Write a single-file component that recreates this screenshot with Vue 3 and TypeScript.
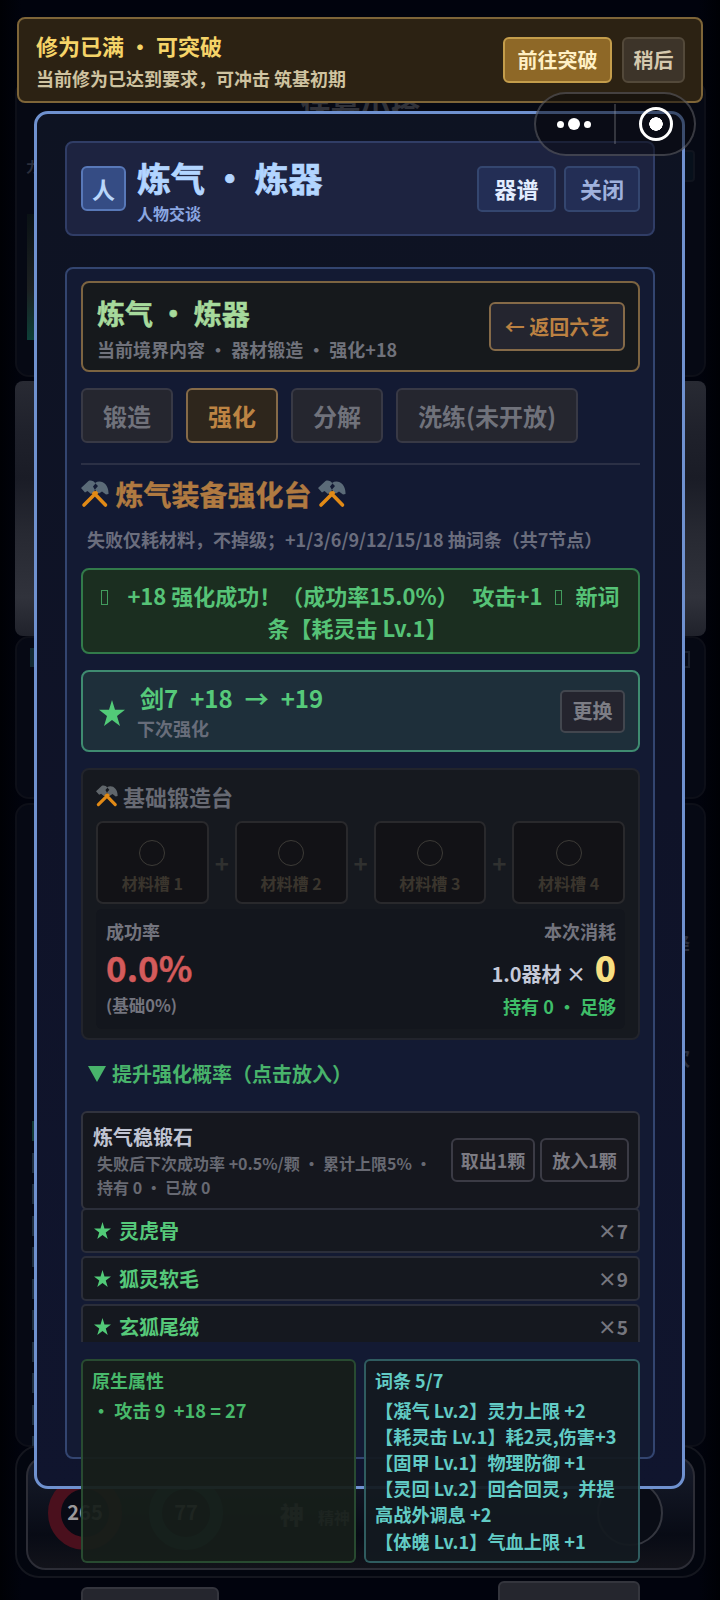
<script setup lang="ts">
interface Tab {
  label: string
  active: boolean
}

interface Material {
  name: string
  count: number
}

const tabs: Tab[] = [
  { label: '锻造', active: false },
  { label: '强化', active: true },
  { label: '分解', active: false },
  { label: '洗练(未开放)', active: false },
]

const slots: number[] = [1, 2, 3, 4]

const materials: Material[] = [
  { name: '灵虎骨', count: 7 },
  { name: '狐灵软毛', count: 9 },
  { name: '玄狐尾绒', count: 5 },
]

const affixes: string[] = [
  '【凝气 Lv.2】灵力上限 +2',
  '【耗灵击 Lv.1】耗2灵,伤害+3',
  '【固甲 Lv.1】物理防御 +1',
  '【灵回 Lv.2】回合回灵，并提高战外调息 +2',
  '【体魄 Lv.1】气血上限 +1',
]
</script>

<template>
  <div class="screen">
    <!-- dimmed game page behind the dialog -->
    <div class="scene">
      <div class="scene-panel top"><span class="scene-title">保暮小搭</span></div>
      <div class="scene-photo"></div>
      <div class="scene-panel mid"></div>
      <div class="scene-panel low"><i v-for="n in 11" :key="n" class="tick"></i></div>
      <div class="dock">
        <div class="dock-inner">
          <span class="orb red">265</span>
          <span class="orb green">77</span>
          <span class="spirit"><b>神</b>精神</span>
          <span class="knob"></span>
        </div>
      </div>
      <span class="ghost g1">力</span>
      <span class="ghost g2">降</span>
      <span class="ghost g3">欢</span>
      <span class="chip c1"></span>
      <span class="chip c2"></span>
      <span class="chip c3"></span>
      <span class="chip c4"></span>
    </div>

    <main class="modal">
      <header class="head">
        <div class="avatar">人</div>
        <div class="head-text">
          <h1>炼气 ・ 炼器</h1>
          <p>人物交谈</p>
        </div>
        <button class="hbtn bright">器谱</button>
        <button class="hbtn close">关闭</button>
      </header>

      <section class="panel">
        <div class="realm">
          <div class="grow">
            <h2>炼气 ・ 炼器</h2>
            <p>当前境界内容 ・ 器材锻造 ・ 强化+18</p>
          </div>
          <button class="back">← 返回六艺</button>
        </div>

        <nav class="tabs">
          <button v-for="t in tabs" :key="t.label" class="tab" :class="{ active: t.active }">{{ t.label }}</button>
        </nav>

        <hr class="rule" />

        <h3 class="bench">
          <svg class="tool" viewBox="0 0 28 28">
            <path d="M9 9 24.500 25M18 10 3 25" stroke="#e18a16" stroke-width="3.600" stroke-linecap="round" />
            <path d="M0 8 7.500 1C10 0 13 1 14.500 3.500L12 6.500 14 10 10 14 6.500 11 4 12.500Z" fill="#5b6b78" />
            <path d="M14 3C20 -1 28 4 27.500 14L25 14.500 21 11.500 18 13.500 14 9.500 17 6Z" fill="#5b6b78" />
          </svg>
          <span>炼气装备强化台</span>
          <svg class="tool" viewBox="0 0 28 28">
            <path d="M9 9 24.500 25M18 10 3 25" stroke="#e18a16" stroke-width="3.600" stroke-linecap="round" />
            <path d="M0 8 7.500 1C10 0 13 1 14.500 3.500L12 6.500 14 10 10 14 6.500 11 4 12.500Z" fill="#5b6b78" />
            <path d="M14 3C20 -1 28 4 27.500 14L25 14.500 21 11.500 18 13.500 14 9.500 17 6Z" fill="#5b6b78" />
          </svg>
        </h3>
        <p class="hint">失败仅耗材料，不掉级；+1/3/6/9/12/15/18 抽词条（共7节点）</p>

        <div class="result">
          <div><i class="box first"></i>+18 强化成功！（成功率15.0%）<span class="gain">攻击+1</span><i class="box"></i>新词</div>
          <div class="second">条【耗灵击 Lv.1】</div>
        </div>

        <div class="item">
          <svg class="star big" viewBox="0 0 26 26"><path d="M13 0 16 9.800H26L18 15.900 21 26 13 19.900 5 26 8 15.900 0 9.800H10Z" /></svg>
          <div class="grow">
            <h4><span>剑7</span><span>+18</span><span>→</span><span>+19</span></h4>
            <p>下次强化</p>
          </div>
          <button class="swap">更换</button>
        </div>

        <div class="forge">
          <h5>
            <svg class="tool small" viewBox="0 0 28 28">
              <path d="M9 9 24.500 25M18 10 3 25" stroke="#e18a16" stroke-width="4" stroke-linecap="round" />
              <path d="M0 8 7.500 1C10 0 13 1 14.500 3.500L12 6.500 14 10 10 14 6.500 11 4 12.500Z" fill="#60666b" />
              <path d="M14 3C20 -1 28 4 27.500 14L25 14.500 21 11.500 18 13.500 14 9.500 17 6Z" fill="#60666b" />
            </svg>
            基础锻造台
          </h5>
          <div class="slots">
            <template v-for="n in slots" :key="n">
              <span v-if="n > 1" class="plus">+</span>
              <div class="slot">
                <i class="ring"></i>
                <span>材料槽 {{ n }}</span>
              </div>
            </template>
          </div>
          <div class="stats">
            <div>
              <div class="label">成功率</div>
              <div class="rate">0.0%</div>
              <div class="base">(基础0%)</div>
            </div>
            <div class="cost">
              <div class="label">本次消耗</div>
              <div class="need">1.0器材 × <b>0</b></div>
              <div class="own">持有 0 ・ 足够</div>
            </div>
          </div>
        </div>

        <div class="toggle"><i class="tri"></i>提升强化概率（点击放入）</div>

        <div class="stone">
          <div class="stone-text">
            <h6>炼气稳锻石</h6>
            <p>失败后下次成功率 +0.5%/颗 ・ 累计上限5% ・<br />持有 0 ・ 已放 0</p>
          </div>
          <button class="sbtn">取出1颗</button>
          <button class="sbtn wide">放入1颗</button>
        </div>

        <div class="list">
          <div v-for="m in materials" :key="m.name" class="row">
            <svg class="star" viewBox="0 0 26 26"><path d="M13 0 16 9.800H26L18 15.900 21 26 13 19.900 5 26 8 15.900 0 9.800H10Z" /></svg>
            <span class="grow">{{ m.name }}</span>
            <span class="count">×{{ m.count }}</span>
          </div>
        </div>

        <div class="attrs">
          <div class="attr native">
            <h6>原生属性</h6>
            <p>・ 攻击 9&nbsp; +18 = 27</p>
          </div>
          <div class="attr affix">
            <h6>词条 5/7</h6>
            <p v-for="a in affixes" :key="a">{{ a }}</p>
          </div>
        </div>

        <div class="foot">
          <span class="fbtn left"></span>
          <span class="fbtn right"></span>
        </div>
      </section>
    </main>

    <aside class="banner">
      <div class="grow">
        <h2>修为已满 ・ 可突破</h2>
        <p>当前修为已达到要求，可冲击 筑基初期</p>
      </div>
      <button class="go">前往突破</button>
      <button class="later">稍后</button>
    </aside>

    <div class="capsule">
      <span class="dots"><i></i><i></i><i></i></span>
      <span class="split"></span>
      <span class="target"></span>
    </div>
  </div>
</template>

<style>
html,
body {
  margin: 0;
  background: #00020b;
}
</style>

<style scoped>
* {
  box-sizing: border-box;
  margin: 0;
  padding: 0;
}
.screen {
  position: relative;
  width: 720px;
  height: 1600px;
  overflow: hidden;
  background: linear-gradient(90deg, #000105, #01030d 3%, #01030d 97%, #000105);
  font-family: 'Noto Sans CJK SC', 'Noto Sans', sans-serif;
  font-weight: 700;
  white-space: nowrap;
}
button {
  display: block;
  padding-bottom: 1px;
  font: inherit;
  white-space: nowrap;
  flex: none;
}
h1, h2, h3, h4, h5, h6 {
  font-weight: 700;
}
.grow {
  flex: 1;
}

/* backdrop */
.scene {
  position: absolute;
  inset: 0;
  padding: 80px 14px 0 15px;
}
.scene-panel {
  border: 2px solid #0d0f18;
  border-radius: 14px;
  background: #060914;
}
.scene-panel.top {
  height: 297px;
  text-align: center;
}
.scene-title {
  display: block;
  font-size: 30px;
  line-height: 46px;
  color: #30323a;
}
.scene-photo {
  height: 255px;
  margin-top: 4px;
  border-radius: 8px;
  background: linear-gradient(#282a33, #1f212b 20%, #1a1c26 38%, #272932 60%, #30323b 85%, #20222b);
}
.scene-panel.mid {
  height: 163px;
}
.scene-panel.low {
  height: 644px;
  margin-top: 4px;
  padding: 316px 0 0 15px;
}
.tick {
  display: block;
  width: 5px;
  height: 20px;
  margin-bottom: 11.500px;
  background: #202e3d;
}
.tick:first-child {
  background: #143a34;
}
.dock {
  position: absolute;
  left: 15px;
  top: 1445px;
  width: 691px;
  height: 133px;
  padding: 9px;
  border: 2px solid #14161e;
  border-radius: 24px;
  background: #03060f;
}
.dock-inner {
  display: flex;
  align-items: center;
  height: 114px;
  width: 669px;
  border: 2px solid #2c2d36;
  border-radius: 20px;
  background: linear-gradient(#171c2b, #080b15 70%, #12131a);
}
.orb {
  width: 74px;
  height: 74px;
  margin-left: 20px;
  border: 13px solid #4a101d;
  border-radius: 50%;
  background: #080a14;
  font-size: 20px;
  line-height: 46px;
  text-align: center;
  color: #9a989a;
}
.orb.green {
  margin-left: 27px;
  border-color: #12484a;
}
.spirit {
  margin-left: 57px;
  color: #80808c;
  font-size: 16px;
}
.spirit b {
  font-size: 24px;
  margin-right: 14px;
}
.knob {
  width: 66px;
  height: 66px;
  margin: 0 30px 0 auto;
  border: 2px solid #34363f;
  border-radius: 50%;
  background: #090c15;
}
.ghost {
  position: absolute;
  font-size: 20px;
  color: #2b2e3b;
}
.g1 { left: 26px; top: 156px; font-size: 14px; }
.g2 { left: 670px; top: 929px; }
.g3 { left: 670px; top: 1043px; }
.chip {
  position: absolute;
  background: #132a32;
}
.c1 { left: 30px; top: 648px; width: 6px; height: 19px; }
.c2 { left: 27px; top: 214px; width: 10px; height: 126px; background: linear-gradient(#0a1215, #1c2021 60%, #0d4038); }
.c3 { left: 676px; top: 150px; width: 19px; height: 32px; border: 2px solid #10141e; border-radius: 4px; background: #07101b; }
.c4 { left: 680px; top: 651px; width: 10px; height: 17px; border: 2px solid #1b202b; background: none; }

/* dialog */
.modal {
  position: relative;
  width: 651px;
  height: 1378px;
  margin: 111px 0 0 34px;
  padding: 27px;
  float: left;
  border: 3px solid #6f91cf;
  border-radius: 14px;
  background: linear-gradient(#0e1322, #0f1328 50%, #10152e);
}
.head {
  display: flex;
  align-items: center;
  width: 590px;
  height: 95px;
  margin-left: 1px;
  padding: 0 13px 0 14px;
  border: 2px solid #303d66;
  border-radius: 8px;
  background: #1d2340;
}
.avatar {
  width: 45px;
  height: 45px;
  border: 2px solid #5878b8;
  border-radius: 6px;
  background: #354c84;
  color: #b9d6fb;
  font-size: 23px;
  line-height: 43px;
  text-align: center;
}
.head-text {
  flex: 1;
  padding: 5px 0 0 11px;
}
.head h1 {
  height: 47px;
  font-size: 34px;
  line-height: 46px;
  color: #b2d5ff;
  -webkit-text-stroke: 0.700px #b2d5ff;
}
.head p {
  height: 26px;
  font-size: 16px;
  line-height: 22px;
  color: #8aa6e0;
}
.hbtn {
  height: 46px;
  border: 2px solid #34466f;
  border-radius: 5px;
  background: #232e55;
  font-size: 22px;
}
.hbtn.bright {
  width: 79px;
  color: #e2ecff;
}
.hbtn.close {
  width: 76px;
  margin-left: 8px;
  color: #9fb1dd;
}
.panel {
  width: 590px;
  height: 1192px;
  margin: 31px 0 0 1px;
  padding: 12px 13px 0 14px;
  border: 2px solid #334570;
  border-radius: 8px;
  background: #131a33;
}
.realm {
  display: flex;
  align-items: center;
  height: 91px;
  padding: 0 13px 0 14px;
  border: 2px solid #7c6441;
  border-radius: 8px;
  background: #16191c;
}
.realm .grow {
  padding-top: 4px;
}
.realm h2 {
  font-size: 28px;
  line-height: 40px;
  color: #a7da9c;
  -webkit-text-stroke: 0.500px #a7da9c;
}
.realm p {
  font-size: 18px;
  line-height: 32px;
  color: #70727b;
}
.back {
  width: 136px;
  height: 49px;
  border: 2px solid #856a48;
  border-radius: 6px;
  background: #24252f;
  color: #bb8142;
  font-size: 20px;
}
.tabs {
  display: flex;
  gap: 13px;
  height: 55px;
  margin-top: 16px;
}
.tab {
  padding: 0 20px;
  border: 2px solid #383945;
  border-radius: 6px;
  background: #25262f;
  color: #70727b;
  font-size: 24px;
}
.tab.active {
  border-color: #856a48;
  background: #2e261c;
  color: #bd8443;
}
.rule {
  height: 2px;
  margin-top: 20px;
  border: 0;
  background: #2b3045;
}
.bench {
  display: flex;
  align-items: center;
  gap: 6.500px;
  height: 40px;
  margin-top: 9px;
  font-size: 28px;
  line-height: 40px;
  color: #b07a41;
  -webkit-text-stroke: 0.400px #b07a41;
}
.tool {
  width: 28px;
  height: 28px;
  fill: none;
}
.tool.small {
  width: 22px;
  height: 22px;
  margin-right: 5px;
}
.hint {
  height: 28px;
  margin: 11px 0 0 6px;
  font-size: 18px;
  line-height: 28px;
  color: #6a6d7d;
}
.result {
  height: 86px;
  margin-top: 15px;
  padding-top: 9px;
  border: 2px solid #327a4a;
  border-radius: 8px;
  background: #1b2e20;
  color: #56c377;
  font-size: 22px;
  line-height: 32px;
  text-align: center;
}
.result .second {
  padding-right: 6px;
}
.box {
  display: inline-block;
  width: 7px;
  height: 15px;
  margin: 0 14px 0 12px;
  border: 1px solid #429c5d;
}
.box.first {
  margin: 0 19px 0 0;
}
.gain {
  margin-left: 14px;
}
.item {
  display: flex;
  align-items: center;
  height: 82px;
  margin-top: 16px;
  padding: 0 13px 0 15px;
  border: 2px solid #3f8b70;
  border-radius: 8px;
  background: #1e2f3a;
}
.item .grow {
  padding-top: 4px;
}
.star {
  width: 17px;
  height: 17px;
  fill: #52cb78;
}
.star.big {
  width: 28px;
  height: 26px;
  margin: 3px 11px 0 0;
}
.item h4 {
  display: flex;
  gap: 12px;
  padding-left: 3px;
  font-size: 24px;
  line-height: 30px;
  color: #56c97a;
}
.item p {
  font-size: 18px;
  line-height: 30px;
  color: #686d7a;
}
.swap {
  width: 65px;
  height: 43px;
  border: 2px solid #42464e;
  border-radius: 5px;
  background: #24242e;
  color: #7c7d85;
  font-size: 20px;
}
.forge {
  height: 272px;
  margin-top: 16px;
  padding: 9px 13px 0;
  border: 2px solid #22242c;
  border-radius: 8px;
  background: #16191f;
}
.forge h5 {
  display: flex;
  align-items: center;
  height: 34px;
  font-size: 22px;
  line-height: 34px;
  color: #676a73;
}
.slots {
  display: flex;
  align-items: center;
  height: 83px;
  margin-top: 8px;
}
.slot {
  flex: 1;
  height: 83px;
  padding-top: 17px;
  border: 2px solid #29292c;
  border-radius: 7px;
  background: #121216;
  text-align: center;
  font-size: 16px;
  line-height: 24px;
  color: #3a352d;
}
.ring {
  display: block;
  width: 26px;
  height: 26px;
  margin: 0 auto 5px;
  border: 1.500px solid #3d3b37;
  border-radius: 50%;
}
.plus {
  width: 26px;
  text-align: center;
  font-size: 24px;
  line-height: 30px;
  color: #303130;
}
.stats {
  display: flex;
  justify-content: space-between;
  height: 120px;
  margin-top: 5px;
  padding: 8px 9px 0 10px;
  background: #13161d;
  border-radius: 6px;
}
.label {
  font-size: 18px;
  line-height: 28px;
  color: #73747e;
}
.rate {
  height: 47px;
  font-size: 35px;
  line-height: 43px;
  color: #d45b5b;
  -webkit-text-stroke: 0.400px #d45b5b;
}
.base {
  font-size: 16.500px;
  line-height: 26px;
  color: #73747e;
}
.cost {
  text-align: right;
}
.need {
  height: 47px;
  font-size: 20px;
  line-height: 44px;
  color: #c5c9d8;
}
.need b {
  margin-left: 4px;
  font-size: 35px;
  color: #f8df81;
}
.own {
  font-size: 18px;
  line-height: 28px;
  color: #3fbe69;
}
.toggle {
  display: flex;
  align-items: center;
  height: 28px;
  margin: 20px 0 0 7px;
  font-size: 20px;
  line-height: 28px;
  color: #48b36b;
}
.tri {
  margin-right: 6px;
  border: 9.500px solid transparent;
  border-top: 16px solid #48b36b;
  border-bottom: 0;
}
.stone {
  display: flex;
  align-items: center;
  height: 99px;
  margin: 23px 0 0;
  padding: 0 9px 0 10px;
  border: 2px solid #31333e;
  border-radius: 6px;
  background: #15171e;
}
.stone-text {
  flex: 1;
}
.stone h6 {
  font-size: 20px;
  line-height: 28px;
  color: #c0c4d2;
}
.stone p {
  padding-left: 4px;
  font-size: 16px;
  line-height: 24px;
  color: #676972;
}
.sbtn {
  width: 84px;
  height: 44px;
  margin-top: -1px;
  border: 2px solid #3b3b45;
  border-radius: 6px;
  background: #18181e;
  color: #7b7a82;
  font-size: 18px;
}
.sbtn.wide {
  width: 89px;
  margin-left: 5px;
}
.list {
  display: flex;
  flex-direction: column;
  gap: 3px;
  height: 134px;
  margin: -2px 0 0;
  overflow: hidden;
}
.row {
  display: flex;
  align-items: center;
  flex: none;
  height: 45px;
  padding: 0 10px 0 11px;
  border: 2px solid #2b2e3a;
  border-radius: 5px;
  background: #15181f;
  font-size: 20px;
  color: #56c97a;
}
.row .grow {
  padding-left: 8px;
}
.count {
  font-size: 19px;
  color: #75767e;
}
.attrs {
  position: relative;
  display: grid;
  grid-template-columns: 275px 276px;
  gap: 8px;
  height: 204px;
  margin-top: 17px;
}
.attr {
  padding: 6px 0 0 9px;
  border: 2px solid;
  border-radius: 6px;
  font-size: 18.200px;
  line-height: 26.100px;
  white-space: normal;
}
.affix {
  padding-right: 10px;
}
.attr h6 {
  margin-bottom: 4px;
  font-size: 18px;
}
.native {
  border-color: rgba(70, 150, 90, 0.38);
  background: rgba(22, 30, 25, 0.94);
  color: #48b96b;
}
.affix {
  border-color: rgba(85, 175, 175, 0.45);
  background: rgba(19, 26, 32, 0.94);
  color: #62cbc5;
}
.foot {
  display: flex;
  justify-content: space-between;
  align-items: flex-start;
  margin-top: 18px;
}
.fbtn {
  width: 142px;
  height: 60px;
  border: 2px solid #34353d;
  border-radius: 6px;
  background: #25262e;
}
.fbtn.left {
  width: 138px;
  margin-top: 6px;
}

/* floating notice */
.banner {
  position: absolute;
  left: 17px;
  top: 17px;
  display: flex;
  align-items: center;
  width: 686px;
  height: 86px;
  padding: 0 16px 0 17px;
  border: 2px solid #7e6538;
  border-radius: 8px;
  background: #2c2213;
}
.banner h2 {
  font-size: 22px;
  line-height: 32px;
  color: #f6d468;
}
.banner p {
  height: 30px;
  font-size: 18px;
  line-height: 34px;
  color: #cfc3a0;
}
.go,
.later {
  height: 46px;
  border: 2px solid #c49d4b;
  border-radius: 6px;
  background: #8e6827;
  color: #fff0c4;
  font-size: 20px;
}
.go {
  width: 109px;
}
.later {
  width: 63px;
  margin-left: 10px;
  border-color: #53493a;
  background: #3d3429;
  color: #d5c9ae;
}
.capsule {
  position: absolute;
  left: 534px;
  top: 92px;
  display: flex;
  align-items: center;
  width: 162px;
  height: 64px;
  border: 2px solid rgba(150, 150, 155, 0.36);
  border-radius: 32px;
  background: rgba(5, 5, 10, 0.5);
}
.dots {
  display: flex;
  align-items: center;
  gap: 4px;
  margin-left: 21px;
}
.dots i {
  width: 7px;
  height: 7px;
  border-radius: 50%;
  background: #fff;
}
.dots i:nth-child(2) {
  width: 12px;
  height: 12px;
}
.split {
  width: 2px;
  height: 40px;
  margin-left: 23px;
  background: rgba(180, 180, 185, 0.25);
}
.target {
  width: 34px;
  height: 34px;
  margin-left: 23px;
  border: 3.500px solid #fff;
  border-radius: 50%;
  background: radial-gradient(circle, #fff 6.500px, transparent 7px);
}
</style>
